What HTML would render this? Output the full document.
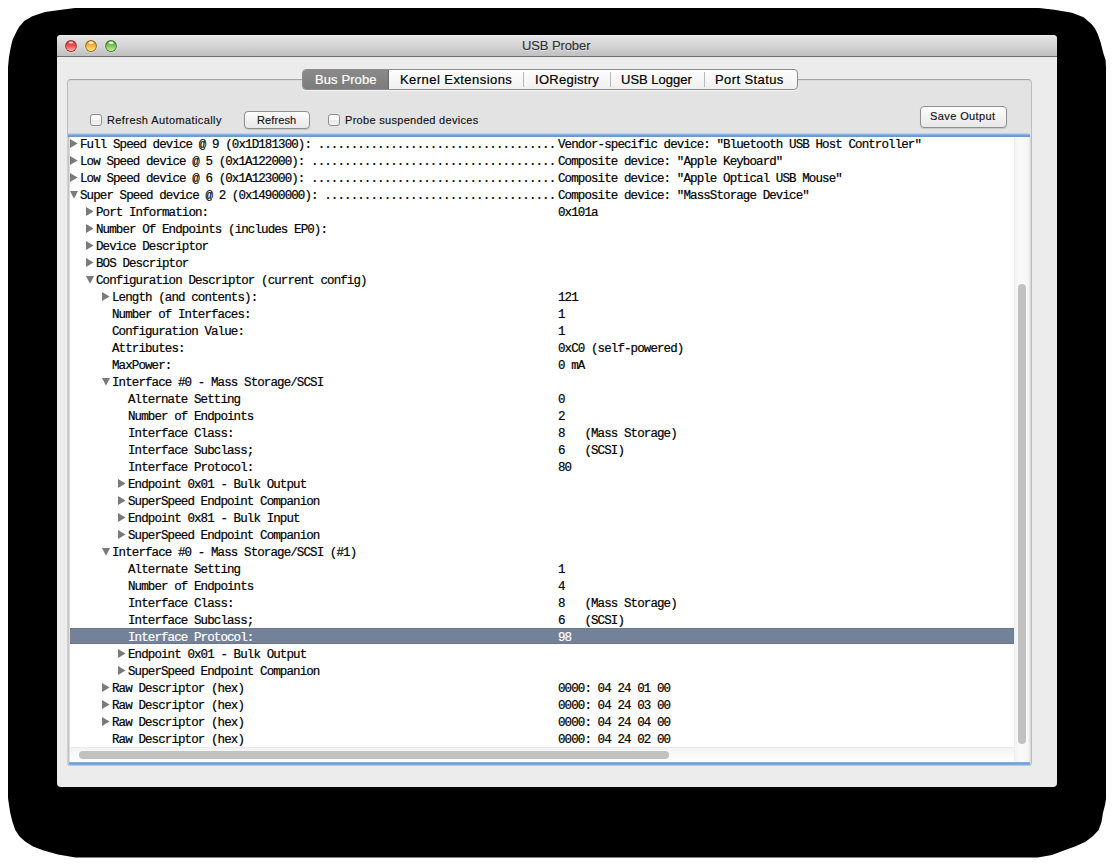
<!DOCTYPE html>
<html><head><meta charset="utf-8"><style>
*{margin:0;padding:0;box-sizing:border-box}
html,body{width:1114px;height:866px;overflow:hidden;background:#fff}
body{position:relative;font-family:"Liberation Sans",sans-serif}
#shadow{position:absolute;left:0;top:0}
#win{position:absolute;left:57px;top:35px;width:1000px;height:752px;background:#ececec;border-radius:4px 4px 4px 4px;overflow:hidden}
#title{position:absolute;left:0;top:0;width:1000px;height:22px;background:linear-gradient(#f2f2f2 0,#e4e4e4 1px,#d5d5d5 50%,#bfbfbf 100%);border-bottom:1px solid #707070}
#title .tt{position:absolute;left:465px;top:3px;font-size:13px;color:#2e2e2e;letter-spacing:-0.1px;white-space:pre;-webkit-text-stroke:0.1px currentColor;text-shadow:0 1px 0 rgba(255,255,255,.45)}
.lt{position:absolute;top:5px;width:12px;height:12px;border-radius:50%}
.lt.r{left:8px;background:radial-gradient(circle at 50% 75%,#ffb0b0 0,#f25a5a 45%,#d83a3a 75%,#8a2020 100%);box-shadow:0 0 0 0.5px #8a2a2a inset}
.lt.y{left:28px;background:radial-gradient(circle at 50% 75%,#fff0a0 0,#f7c04a 45%,#e09a20 75%,#8a5a10 100%)}
.lt.g{left:48px;background:radial-gradient(circle at 50% 75%,#d8f8b8 0,#8cd060 45%,#58a838 75%,#2a6a1a 100%)}
#tabbox{position:absolute;left:10px;top:44px;width:965px;height:687px;background:#e3e3e3;border:1px solid #bdbdbd;border-top-color:#a4a4a4;border-radius:4px;box-shadow:inset 0 1px 1px rgba(0,0,0,.04)}
#seg{position:absolute;left:245px;top:34px;width:496px;height:21px;border-radius:4px;background:linear-gradient(#fefefe,#f0f0f0);border:1px solid #8c8c8c;box-shadow:0 1px 0 rgba(255,255,255,.6)}
.sg{position:absolute;top:0;height:19px;font-size:13px;color:#000;white-space:pre}
.sg span{position:absolute;top:2px;-webkit-text-stroke:0.2px currentColor}
.sep{position:absolute;top:2px;width:1px;height:15px;background:#b8b8b8}
#busp{position:absolute;left:0;top:0;width:86px;height:19px;background:linear-gradient(#8a8a8a,#7c7c7c);border-radius:3px 0 0 3px;border-right:1px solid #6a6a6a}
.ctl{position:absolute;font-size:11px;line-height:13px;color:#111;white-space:pre;-webkit-text-stroke:0.15px currentColor}
.cb{position:absolute;width:12px;height:12px;border-radius:3px;border:1px solid #8e8e8e;background:linear-gradient(#fff 0,#f8f8f8 45%,#ebebeb 55%,#f3f3f3 100%)}
.btn{position:absolute;border:1px solid #8f8f8f;border-radius:4px;background:linear-gradient(#fefefe,#f2f2f2 50%,#e8e8e8);box-shadow:0 1px 1px rgba(0,0,0,.12)}
#sv{position:absolute;left:11px;top:99px;width:963px;height:632px}
#ring_t{position:absolute;left:0;top:-1px;width:962px;height:4px;border-radius:0 2px 0 0;background:linear-gradient(#d2e2f2 0,#9cc2ea 25%,#72a6dc 55%,#6392c6 85%,#9dbde0 100%)}
#ring_b{position:absolute;left:1px;top:628px;width:961px;height:4px;border-radius:0 0 2px 2px;background:linear-gradient(#8ab4e2 0,#6fa2da 35%,#7eabdc 65%,#c9dcef 100%)}
#tbl{position:absolute;left:2px;top:1px;width:944px;height:612px;background:#fff;overflow:hidden}
#lborder{position:absolute;left:-1px;top:3px;width:3px;height:629px;border-radius:0 0 0 3px;background:linear-gradient(90deg,#d6d6d6,#c4c4c4 50%,#e8e8e8)}
.row{position:absolute;left:0;top:0;width:944px;height:17px}
.row.sel{height:16px;background:linear-gradient(#69788f 0,#69788f 1px,#738299 1px,#738299 15px,#69788f 15px)}
.row.sel .t{color:#fff}
.t{position:absolute;top:3px;font-family:"Liberation Mono",monospace;font-size:12.5px;letter-spacing:-0.9px;line-height:15px;-webkit-text-stroke:0.2px currentColor;color:#000;white-space:pre}
.tri{position:absolute}
.tr{position:absolute;top:4px;width:0;height:0;border-top:4.5px solid transparent;border-bottom:4.5px solid transparent;border-left:7.5px solid #777}
.td{position:absolute;top:5px;width:0;height:0;border-left:4px solid transparent;border-right:4px solid transparent;border-top:7.5px solid #777}
#vtrack{position:absolute;left:946px;top:3px;width:17px;height:625px;background:linear-gradient(90deg,#e6e6e6 0,#f4f4f4 1px,#fafafa 40%,#f6f6f6 85%,#d0d0d0 100%)}
#vknob{position:absolute;left:950px;top:150px;width:8px;height:460px;border-radius:4px;background:#c1c1c1}
#htrack{position:absolute;left:2px;top:613px;width:944px;height:16px;background:linear-gradient(#e2e2e2 0,#f3f3f3 1px,#fafafa 50%,#fdfdfd 100%)}
#hknob{position:absolute;left:11px;top:617px;width:590px;height:8px;border-radius:4px;background:#c1c1c1}
</style></head><body>
<svg id="shadow" width="1114" height="866"><path d="M1039,8 L1054.2,9.8 L1072,12.7 L1083.6,17.3 L1091.7,24.2 L1095,28.5 L1097.5,33.5 L1100.5,42 L1103.3,53 L1105.6,60 L1106,67 L1106,799 L1105,805 L1103,812.7 L1101.5,822 L1098.7,830 L1093,836 L1085.6,841.8 L1075,846.5 L1063.8,850.5 L1052,855 L1037.6,857.5 L75.6,857.5 L58,854.5 L43.6,850.5 L33,846.5 L25.5,841.8 L19.5,836.5 L15.3,830 L12.5,822 L10.2,812.7 L9,805 L8,798 L8,67 L9,57 L10.5,48.5 L12.5,40 L16.2,32.3 L19,27 L24.2,21 L32.3,16.2 L45,12.1 L61.4,9.7 L75,8 Z" fill="#000"/></svg>
<div id="win">
 <div id="title"><svg style="position:absolute;left:7px;top:4px" width="14" height="14"><defs><linearGradient id="br" x1="0" y1="0" x2="0" y2="1"><stop offset="0" stop-color="#e84848"/><stop offset="0.45" stop-color="#f24a4a"/><stop offset="1" stop-color="#f9b8b8"/></linearGradient></defs><circle cx="7" cy="7" r="6.6" fill="#fff" opacity="0.35"/><circle cx="7" cy="7" r="5.9" fill="#8e2c2c"/><circle cx="7" cy="7.2" r="4.9" fill="url(#br)"/><ellipse cx="7" cy="3.6" rx="2.3" ry="1.0" fill="#fff" opacity="0.7"/></svg><svg style="position:absolute;left:27px;top:4px" width="14" height="14"><defs><linearGradient id="by" x1="0" y1="0" x2="0" y2="1"><stop offset="0" stop-color="#e8962a"/><stop offset="0.45" stop-color="#f5b440"/><stop offset="1" stop-color="#ffe88a"/></linearGradient></defs><circle cx="7" cy="7" r="6.6" fill="#fff" opacity="0.35"/><circle cx="7" cy="7" r="5.9" fill="#94620e"/><circle cx="7" cy="7.2" r="4.9" fill="url(#by)"/><ellipse cx="7" cy="3.7" rx="2.6" ry="1.2" fill="#fff" opacity="0.85"/></svg><svg style="position:absolute;left:47px;top:4px" width="14" height="14"><defs><linearGradient id="bg" x1="0" y1="0" x2="0" y2="1"><stop offset="0" stop-color="#58a83a"/><stop offset="0.45" stop-color="#7cc55a"/><stop offset="1" stop-color="#c8f0a0"/></linearGradient></defs><circle cx="7" cy="7" r="6.6" fill="#fff" opacity="0.35"/><circle cx="7" cy="7" r="5.9" fill="#3a7424"/><circle cx="7" cy="7.2" r="4.9" fill="url(#bg)"/><ellipse cx="7" cy="3.7" rx="2.6" ry="1.2" fill="#fff" opacity="0.85"/></svg><span class="tt">USB Prober</span></div>
 <div id="tabbox"></div>
 <div id="seg">
  <div id="busp"></div>
  <div class="sg" style="left:12px;color:#fff"><span style="letter-spacing:0.1px">Bus Probe</span></div>
  <div class="sg" style="left:97px"><span style="letter-spacing:0.44px">Kernel Extensions</span></div>
  <i class="sep" style="left:220px"></i>
  <div class="sg" style="left:232px"><span style="letter-spacing:0.27px">IORegistry</span></div>
  <i class="sep" style="left:307px"></i>
  <div class="sg" style="left:318px"><span>USB Logger</span></div>
  <i class="sep" style="left:401px"></i>
  <div class="sg" style="left:412px"><span style="letter-spacing:0.4px">Port Status</span></div>
 </div>
 <i class="cb" style="left:33px;top:79px"></i>
 <span class="ctl" style="left:50px;top:79px;letter-spacing:0.4px">Refresh Automatically</span>
 <div class="btn" style="left:187px;top:76px;width:66px;height:18px"></div>
 <span class="ctl" style="left:200px;top:79px;letter-spacing:0.1px">Refresh</span>
 <i class="cb" style="left:271px;top:79px"></i>
 <span class="ctl" style="left:288px;top:79px;letter-spacing:0.3px">Probe suspended devices</span>
 <div class="btn" style="left:863px;top:71px;width:87px;height:22px"></div>
 <span class="ctl" style="left:873px;top:75px;letter-spacing:0.4px">Save Output</span>
 <div id="sv">
  <div id="lborder"></div>
  <div id="tbl">
<div class="row" style="top:0px"><svg class="tri" style="left:0px;top:4px" width="8" height="9"><path d="M0,0 L7.6,4.5 L0,9Z" fill="#7a7a7a"/></svg><span class="t" style="left:10px">Full Speed device @ 9 (0x1D181300): ....................................</span><span class="t" style="left:488px">Vendor-specific device: &quot;Bluetooth USB Host Controller&quot;</span></div>
<div class="row" style="top:17px"><svg class="tri" style="left:0px;top:4px" width="8" height="9"><path d="M0,0 L7.6,4.5 L0,9Z" fill="#7a7a7a"/></svg><span class="t" style="left:10px">Low Speed device @ 5 (0x1A122000): .....................................</span><span class="t" style="left:488px">Composite device: &quot;Apple Keyboard&quot;</span></div>
<div class="row" style="top:34px"><svg class="tri" style="left:0px;top:4px" width="8" height="9"><path d="M0,0 L7.6,4.5 L0,9Z" fill="#7a7a7a"/></svg><span class="t" style="left:10px">Low Speed device @ 6 (0x1A123000): .....................................</span><span class="t" style="left:488px">Composite device: &quot;Apple Optical USB Mouse&quot;</span></div>
<div class="row" style="top:51px"><svg class="tri" style="left:0px;top:5px" width="8" height="8"><path d="M0,0 L8,0 L4,7.7Z" fill="#7a7a7a"/></svg><span class="t" style="left:10px">Super Speed device @ 2 (0x14900000): ...................................</span><span class="t" style="left:488px">Composite device: &quot;MassStorage Device&quot;</span></div>
<div class="row" style="top:68px"><svg class="tri" style="left:16px;top:4px" width="8" height="9"><path d="M0,0 L7.6,4.5 L0,9Z" fill="#7a7a7a"/></svg><span class="t" style="left:26px">Port Information:</span><span class="t" style="left:488px">0x101a</span></div>
<div class="row" style="top:85px"><svg class="tri" style="left:16px;top:4px" width="8" height="9"><path d="M0,0 L7.6,4.5 L0,9Z" fill="#7a7a7a"/></svg><span class="t" style="left:26px">Number Of Endpoints (includes EP0):</span></div>
<div class="row" style="top:102px"><svg class="tri" style="left:16px;top:4px" width="8" height="9"><path d="M0,0 L7.6,4.5 L0,9Z" fill="#7a7a7a"/></svg><span class="t" style="left:26px">Device Descriptor</span></div>
<div class="row" style="top:119px"><svg class="tri" style="left:16px;top:4px" width="8" height="9"><path d="M0,0 L7.6,4.5 L0,9Z" fill="#7a7a7a"/></svg><span class="t" style="left:26px">BOS Descriptor</span></div>
<div class="row" style="top:136px"><svg class="tri" style="left:16px;top:5px" width="8" height="8"><path d="M0,0 L8,0 L4,7.7Z" fill="#7a7a7a"/></svg><span class="t" style="left:26px">Configuration Descriptor (current config)</span></div>
<div class="row" style="top:153px"><svg class="tri" style="left:32px;top:4px" width="8" height="9"><path d="M0,0 L7.6,4.5 L0,9Z" fill="#7a7a7a"/></svg><span class="t" style="left:42px">Length (and contents):</span><span class="t" style="left:488px">121</span></div>
<div class="row" style="top:170px"><span class="t" style="left:42px">Number of Interfaces:</span><span class="t" style="left:488px">1</span></div>
<div class="row" style="top:187px"><span class="t" style="left:42px">Configuration Value:</span><span class="t" style="left:488px">1</span></div>
<div class="row" style="top:204px"><span class="t" style="left:42px">Attributes:</span><span class="t" style="left:488px">0xC0 (self-powered)</span></div>
<div class="row" style="top:221px"><span class="t" style="left:42px">MaxPower:</span><span class="t" style="left:488px">0 mA</span></div>
<div class="row" style="top:238px"><svg class="tri" style="left:32px;top:5px" width="8" height="8"><path d="M0,0 L8,0 L4,7.7Z" fill="#7a7a7a"/></svg><span class="t" style="left:42px">Interface #0 - Mass Storage/SCSI</span></div>
<div class="row" style="top:255px"><span class="t" style="left:58px">Alternate Setting</span><span class="t" style="left:488px">0</span></div>
<div class="row" style="top:272px"><span class="t" style="left:58px">Number of Endpoints</span><span class="t" style="left:488px">2</span></div>
<div class="row" style="top:289px"><span class="t" style="left:58px">Interface Class:</span><span class="t" style="left:488px">8   (Mass Storage)</span></div>
<div class="row" style="top:306px"><span class="t" style="left:58px">Interface Subclass;</span><span class="t" style="left:488px">6   (SCSI)</span></div>
<div class="row" style="top:323px"><span class="t" style="left:58px">Interface Protocol:</span><span class="t" style="left:488px">80</span></div>
<div class="row" style="top:340px"><svg class="tri" style="left:48px;top:4px" width="8" height="9"><path d="M0,0 L7.6,4.5 L0,9Z" fill="#7a7a7a"/></svg><span class="t" style="left:58px">Endpoint 0x01 - Bulk Output</span></div>
<div class="row" style="top:357px"><svg class="tri" style="left:48px;top:4px" width="8" height="9"><path d="M0,0 L7.6,4.5 L0,9Z" fill="#7a7a7a"/></svg><span class="t" style="left:58px">SuperSpeed Endpoint Companion</span></div>
<div class="row" style="top:374px"><svg class="tri" style="left:48px;top:4px" width="8" height="9"><path d="M0,0 L7.6,4.5 L0,9Z" fill="#7a7a7a"/></svg><span class="t" style="left:58px">Endpoint 0x81 - Bulk Input</span></div>
<div class="row" style="top:391px"><svg class="tri" style="left:48px;top:4px" width="8" height="9"><path d="M0,0 L7.6,4.5 L0,9Z" fill="#7a7a7a"/></svg><span class="t" style="left:58px">SuperSpeed Endpoint Companion</span></div>
<div class="row" style="top:408px"><svg class="tri" style="left:32px;top:5px" width="8" height="8"><path d="M0,0 L8,0 L4,7.7Z" fill="#7a7a7a"/></svg><span class="t" style="left:42px">Interface #0 - Mass Storage/SCSI (#1)</span></div>
<div class="row" style="top:425px"><span class="t" style="left:58px">Alternate Setting</span><span class="t" style="left:488px">1</span></div>
<div class="row" style="top:442px"><span class="t" style="left:58px">Number of Endpoints</span><span class="t" style="left:488px">4</span></div>
<div class="row" style="top:459px"><span class="t" style="left:58px">Interface Class:</span><span class="t" style="left:488px">8   (Mass Storage)</span></div>
<div class="row" style="top:476px"><span class="t" style="left:58px">Interface Subclass;</span><span class="t" style="left:488px">6   (SCSI)</span></div>
<div class="row sel" style="top:493px"><span class="t" style="left:58px">Interface Protocol:</span><span class="t" style="left:488px">98</span></div>
<div class="row" style="top:510px"><svg class="tri" style="left:48px;top:4px" width="8" height="9"><path d="M0,0 L7.6,4.5 L0,9Z" fill="#7a7a7a"/></svg><span class="t" style="left:58px">Endpoint 0x01 - Bulk Output</span></div>
<div class="row" style="top:527px"><svg class="tri" style="left:48px;top:4px" width="8" height="9"><path d="M0,0 L7.6,4.5 L0,9Z" fill="#7a7a7a"/></svg><span class="t" style="left:58px">SuperSpeed Endpoint Companion</span></div>
<div class="row" style="top:544px"><svg class="tri" style="left:32px;top:4px" width="8" height="9"><path d="M0,0 L7.6,4.5 L0,9Z" fill="#7a7a7a"/></svg><span class="t" style="left:42px">Raw Descriptor (hex)</span><span class="t" style="left:488px">0000: 04 24 01 00</span></div>
<div class="row" style="top:561px"><svg class="tri" style="left:32px;top:4px" width="8" height="9"><path d="M0,0 L7.6,4.5 L0,9Z" fill="#7a7a7a"/></svg><span class="t" style="left:42px">Raw Descriptor (hex)</span><span class="t" style="left:488px">0000: 04 24 03 00</span></div>
<div class="row" style="top:578px"><svg class="tri" style="left:32px;top:4px" width="8" height="9"><path d="M0,0 L7.6,4.5 L0,9Z" fill="#7a7a7a"/></svg><span class="t" style="left:42px">Raw Descriptor (hex)</span><span class="t" style="left:488px">0000: 04 24 04 00</span></div>
<div class="row" style="top:595px"><span class="t" style="left:42px">Raw Descriptor (hex)</span><span class="t" style="left:488px">0000: 04 24 02 00</span></div>
  </div>
  <div id="vtrack"></div><div id="vknob"></div>
  <div id="htrack"></div><div id="hknob"></div>
  <div id="ring_t"></div><div id="ring_b"></div>
 </div>
</div>
</body></html>
